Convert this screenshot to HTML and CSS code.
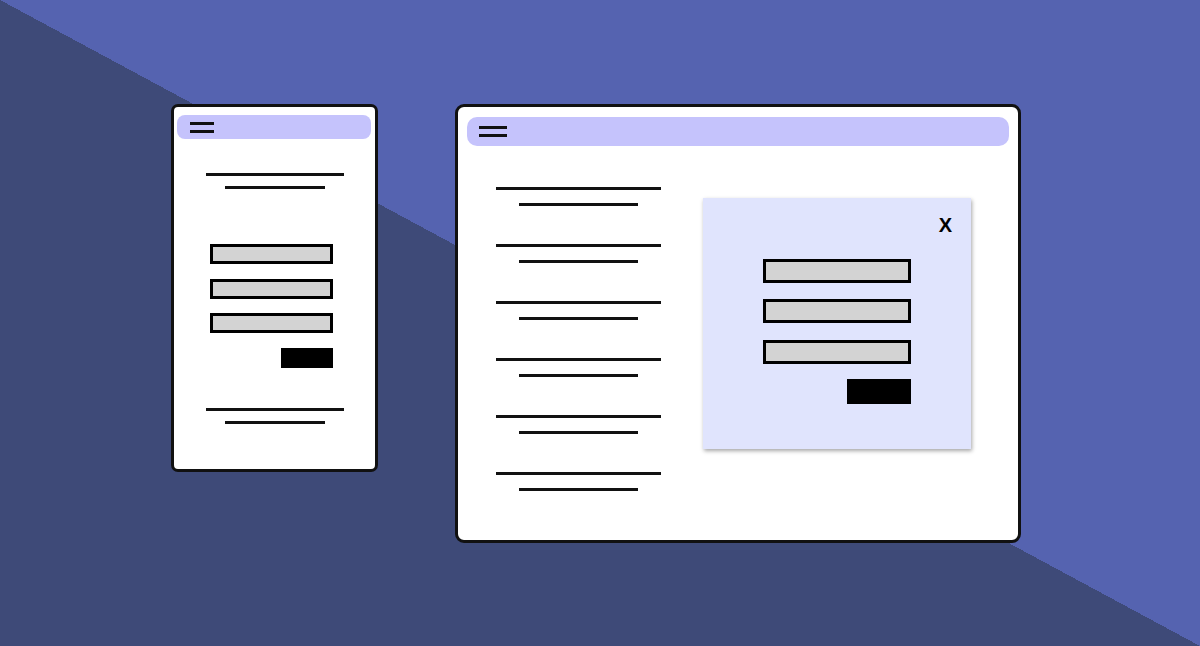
FILE: index.html
```html
<!DOCTYPE html>
<html lang="en">
<head>
<meta charset="utf-8">
<title>Responsive layouts</title>
<link rel="stylesheet" href="styles.css">
</head>
<body>
<main class="scene">
  <!-- Mobile layout: form inline in the page -->
  <section class="phone">
    <header class="bar bar--phone">
      <span class="burger burger--sm"><i></i><i></i></span>
    </header>
    <div class="rule rule--long-sm rule--first"></div>
    <div class="rule rule--short-sm rule--second"></div>
    <form class="form form--phone">
      <div class="field field--sm"></div>
      <div class="field field--sm"></div>
      <div class="field field--sm"></div>
      <div class="submit submit--sm"></div>
    </form>
    <div class="rule rule--long-sm rule--after"></div>
    <div class="rule rule--short-sm rule--second"></div>
  </section>

  <!-- Desktop layout: form in a modal beside the content -->
  <section class="desktop">
    <header class="bar bar--desktop">
      <span class="burger burger--lg"><i></i><i></i></span>
    </header>
    <div class="desk-body">
      <div class="text-col">
        <div class="pair"><div class="rule rule--long"></div><div class="rule rule--short"></div></div>
        <div class="pair"><div class="rule rule--long"></div><div class="rule rule--short"></div></div>
        <div class="pair"><div class="rule rule--long"></div><div class="rule rule--short"></div></div>
        <div class="pair"><div class="rule rule--long"></div><div class="rule rule--short"></div></div>
        <div class="pair"><div class="rule rule--long"></div><div class="rule rule--short"></div></div>
        <div class="pair"><div class="rule rule--long"></div><div class="rule rule--short"></div></div>
      </div>
      <div class="modal">
        <span class="close">X</span>
        <form class="form form--modal">
          <div class="field field--lg"></div>
          <div class="field field--lg"></div>
          <div class="field field--lg"></div>
          <div class="submit submit--lg"></div>
        </form>
      </div>
    </div>
  </section>
</main>
</body>
</html>
```
FILE: styles.css
```css
* { box-sizing: border-box; }

html, body {
  margin: 0;
  width: 1200px;
  height: 646px;
  overflow: hidden;
}

body {
  font-family: "Liberation Sans", Arial, sans-serif;
  background: linear-gradient(to top right, #3e4a78 50%, #5563b0 50%);
}

.scene {
  display: flex;
  align-items: flex-start;
  gap: 77px;
  padding: 104px 0 0 171px;
}

/* ---------- shared pieces ---------- */
.bar {
  display: flex;
  align-items: center;
  background: #c5c3fc;
}

.burger {
  display: flex;
  flex-direction: column;
  gap: 5px;
}
.burger i {
  display: block;
  height: 3px;
  background: #111;
}
.burger--sm i { width: 24px; }
.burger--lg i { width: 28px; }

.rule {
  height: 3px;
  background: #111;
}

.form {
  display: flex;
  flex-direction: column;
  align-items: flex-end;
}

.field {
  width: 100%;
  border: 3px solid #000;
  background: #d3d3d3;
}

.submit { background: #000; }

/* ---------- mobile ---------- */
.phone {
  width: 207px;
  height: 368px;
  border: 3px solid #111;
  border-radius: 7px;
  background: #fff;
  display: flex;
  flex-direction: column;
  align-items: center;
}

.bar--phone {
  align-self: stretch;
  height: 24px;
  margin: 8px 4px 0 3px;
  border-radius: 8px;
  padding-left: 13px;
}

.rule--long-sm { width: 138px; }
.rule--short-sm { width: 100px; }
.rule--first { margin-top: 34px; }
.rule--second { margin-top: 10px; }
.rule--after { margin-top: 40.5px; }

.form--phone {
  align-self: flex-start;
  width: 123px;
  margin: 55px 0 0 36px;
  gap: 14.5px;
}
.field--sm { height: 20px; }
.submit--sm { width: 52px; height: 20px; }

/* ---------- desktop ---------- */
.desktop {
  width: 566px;
  height: 439px;
  border: 3px solid #111;
  border-radius: 9px;
  background: #fff;
}

.bar--desktop {
  height: 29px;
  margin: 10px 9px 0 9px;
  border-radius: 10px;
  padding-left: 12px;
}

.desk-body {
  display: flex;
  align-items: flex-start;
}

.text-col {
  width: 165px;
  margin: 41px 0 0 38px;
  display: flex;
  flex-direction: column;
  gap: 38px;
}

.pair {
  display: flex;
  flex-direction: column;
  align-items: center;
  gap: 13px;
}
.rule--long { width: 165px; }
.rule--short { width: 119px; }

.modal {
  position: relative;
  width: 268px;
  height: 251px;
  margin: 52px 0 0 42px;
  background: #e0e4fd;
  box-shadow: 1px 2px 4px rgba(0, 0, 0, 0.35);
  padding-top: 60.5px;
}

.close {
  position: absolute;
  top: 17px;
  right: 19px;
  font-size: 20px;
  line-height: 20px;
  font-weight: 700;
  color: #000;
}

.form--modal {
  width: 148px;
  margin: 0 auto;
  gap: 16.5px;
}
.field--lg { height: 24px; }
.submit--lg { width: 64px; height: 25px; margin-top: -1px; }
```
